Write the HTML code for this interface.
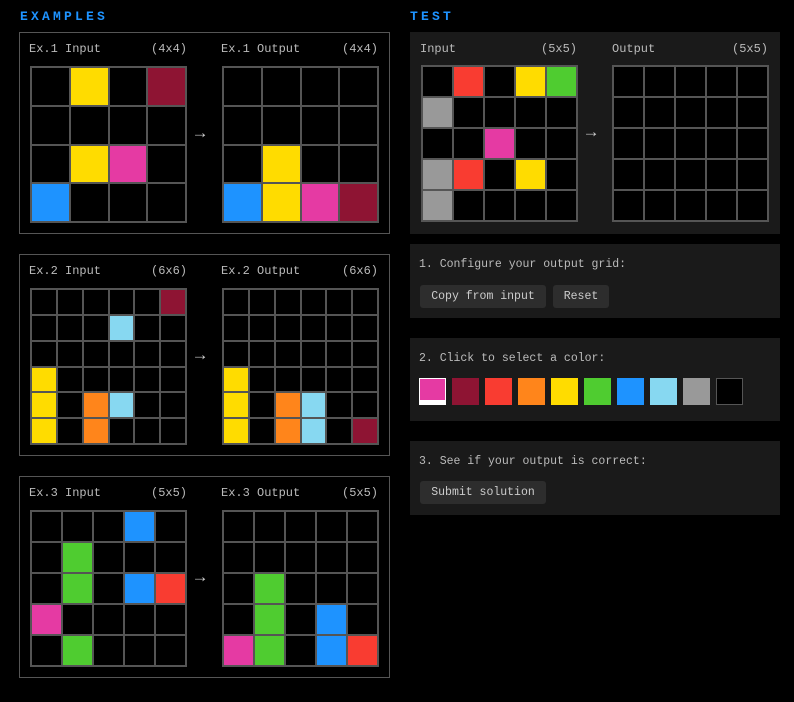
<!DOCTYPE html>
<html><head><meta charset="utf-8"><style>
*{margin:0;padding:0;box-sizing:border-box}
body{width:794px;height:702px;background:#000;position:relative;overflow:hidden;font-family:"Liberation Mono",monospace;font-size:11px;color:#bbb}
.h{position:absolute;top:9px;color:#1E93FF;font-weight:bold;font-size:13px;letter-spacing:3.2px}
.box{position:absolute;left:19px;width:371px;height:202px;border:1px solid #555}
.tp{position:absolute;left:410px;top:32px;width:370px;height:202px;background:#1a1a1a}
.lab{position:absolute;top:9px;font-size:12px}
.g{position:absolute;top:33px;width:157px;height:157px;background:#555;display:grid;gap:2px;padding:2px}
.g i{display:block;background:#000}
.g4{grid-template-columns:repeat(4,1fr);grid-template-rows:repeat(4,1fr)}
.g5{grid-template-columns:repeat(5,1fr);grid-template-rows:repeat(5,1fr)}
.g6{grid-template-columns:repeat(6,1fr);grid-template-rows:repeat(6,1fr)}
.arr{position:absolute;top:92px;left:175px;font-size:17px;color:#ccc}
.g i.y{background:#FFDC00}.g i.m{background:#8E1433}.g i.p{background:#E53AA3}.g i.b{background:#1E93FF}
.g i.r{background:#F93C31}.g i.o{background:#FF851B}.g i.gr{background:#4FCC30}.g i.lb{background:#87D8F1}.g i.k{background:#999}
.pn{position:absolute;left:410px;width:370px;background:#1a1a1a}
.pn .t{position:absolute;left:9px;top:14px;font-size:11.5px}
.btn{position:absolute;height:23px;background:#2d2d2d;border-radius:3px;color:#ccc;line-height:23px;text-align:center;font-size:11.5px}
.sw{position:absolute;top:40px;width:27px;height:27px}
</style></head><body>
<div class="h" style="left:20px">EXAMPLES</div>
<div class="h" style="left:410px">TEST</div>

<div class="box" style="top:32px">
<div class="lab" style="left:9px">Ex.1 Input</div><div class="lab" style="left:131px">(4x4)</div>
<div class="lab" style="left:201px">Ex.1 Output</div><div class="lab" style="left:322px">(4x4)</div>
<div class="g g4" style="left:10px"><i></i><i class="y"></i><i></i><i class="m"></i><i></i><i></i><i></i><i></i><i></i><i class="y"></i><i class="p"></i><i></i><i class="b"></i><i></i><i></i><i></i></div>
<div class="arr">→</div>
<div class="g g4" style="left:202px"><i></i><i></i><i></i><i></i><i></i><i></i><i></i><i></i><i></i><i class="y"></i><i></i><i></i><i class="b"></i><i class="y"></i><i class="p"></i><i class="m"></i></div>
</div>

<div class="box" style="top:254px">
<div class="lab" style="left:9px">Ex.2 Input</div><div class="lab" style="left:131px">(6x6)</div>
<div class="lab" style="left:201px">Ex.2 Output</div><div class="lab" style="left:322px">(6x6)</div>
<div class="g g6" style="left:10px"><i></i><i></i><i></i><i></i><i></i><i class="m"></i><i></i><i></i><i></i><i class="lb"></i><i></i><i></i><i></i><i></i><i></i><i></i><i></i><i></i><i class="y"></i><i></i><i></i><i></i><i></i><i></i><i class="y"></i><i></i><i class="o"></i><i class="lb"></i><i></i><i></i><i class="y"></i><i></i><i class="o"></i><i></i><i></i><i></i></div>
<div class="arr">→</div>
<div class="g g6" style="left:202px"><i></i><i></i><i></i><i></i><i></i><i></i><i></i><i></i><i></i><i></i><i></i><i></i><i></i><i></i><i></i><i></i><i></i><i></i><i class="y"></i><i></i><i></i><i></i><i></i><i></i><i class="y"></i><i></i><i class="o"></i><i class="lb"></i><i></i><i></i><i class="y"></i><i></i><i class="o"></i><i class="lb"></i><i></i><i class="m"></i></div>
</div>

<div class="box" style="top:476px">
<div class="lab" style="left:9px">Ex.3 Input</div><div class="lab" style="left:131px">(5x5)</div>
<div class="lab" style="left:201px">Ex.3 Output</div><div class="lab" style="left:322px">(5x5)</div>
<div class="g g5" style="left:10px"><i></i><i></i><i></i><i class="b"></i><i></i><i></i><i class="gr"></i><i></i><i></i><i></i><i></i><i class="gr"></i><i></i><i class="b"></i><i class="r"></i><i class="p"></i><i></i><i></i><i></i><i></i><i></i><i class="gr"></i><i></i><i></i><i></i></div>
<div class="arr">→</div>
<div class="g g5" style="left:202px"><i></i><i></i><i></i><i></i><i></i><i></i><i></i><i></i><i></i><i></i><i></i><i class="gr"></i><i></i><i></i><i></i><i></i><i class="gr"></i><i></i><i class="b"></i><i></i><i class="p"></i><i class="gr"></i><i></i><i class="b"></i><i class="r"></i></div>
</div>

<div class="tp">
<div class="lab" style="left:10px;top:10px">Input</div><div class="lab" style="left:131px;top:10px">(5x5)</div>
<div class="lab" style="left:202px;top:10px">Output</div><div class="lab" style="left:322px;top:10px">(5x5)</div>
<div class="g g5" style="left:11px"><i></i><i class="r"></i><i></i><i class="y"></i><i class="gr"></i><i class="k"></i><i></i><i></i><i></i><i></i><i></i><i></i><i class="p"></i><i></i><i></i><i class="k"></i><i class="r"></i><i></i><i class="y"></i><i></i><i class="k"></i><i></i><i></i><i></i><i></i></div>
<div class="arr" style="left:176px">→</div>
<div class="g g5" style="left:202px"><i></i><i></i><i></i><i></i><i></i><i></i><i></i><i></i><i></i><i></i><i></i><i></i><i></i><i></i><i></i><i></i><i></i><i></i><i></i><i></i><i></i><i></i><i></i><i></i><i></i></div>
</div>

<div class="pn" style="top:244px;height:74px">
<div class="t">1. Configure your output grid:</div>
<div class="btn" style="left:10px;top:41px;width:126px">Copy from input</div>
<div class="btn" style="left:143px;top:41px;width:56px">Reset</div>
</div>

<div class="pn" style="top:338px;height:83px">
<div class="t">2. Click to select a color:</div>
<div class="sw" style="left:9px;background:#E53AA3;border:1px solid #fff;border-bottom:5px solid #fff"></div>
<div class="sw" style="left:42px;background:#8E1433"></div>
<div class="sw" style="left:75px;background:#F93C31"></div>
<div class="sw" style="left:108px;background:#FF851B"></div>
<div class="sw" style="left:141px;background:#FFDC00"></div>
<div class="sw" style="left:174px;background:#4FCC30"></div>
<div class="sw" style="left:207px;background:#1E93FF"></div>
<div class="sw" style="left:240px;background:#87D8F1"></div>
<div class="sw" style="left:273px;background:#999"></div>
<div class="sw" style="left:306px;background:#000;border:1px solid #555"></div>
</div>

<div class="pn" style="top:441px;height:74px">
<div class="t">3. See if your output is correct:</div>
<div class="btn" style="left:10px;top:40px;width:126px">Submit solution</div>
</div>
</body></html>
